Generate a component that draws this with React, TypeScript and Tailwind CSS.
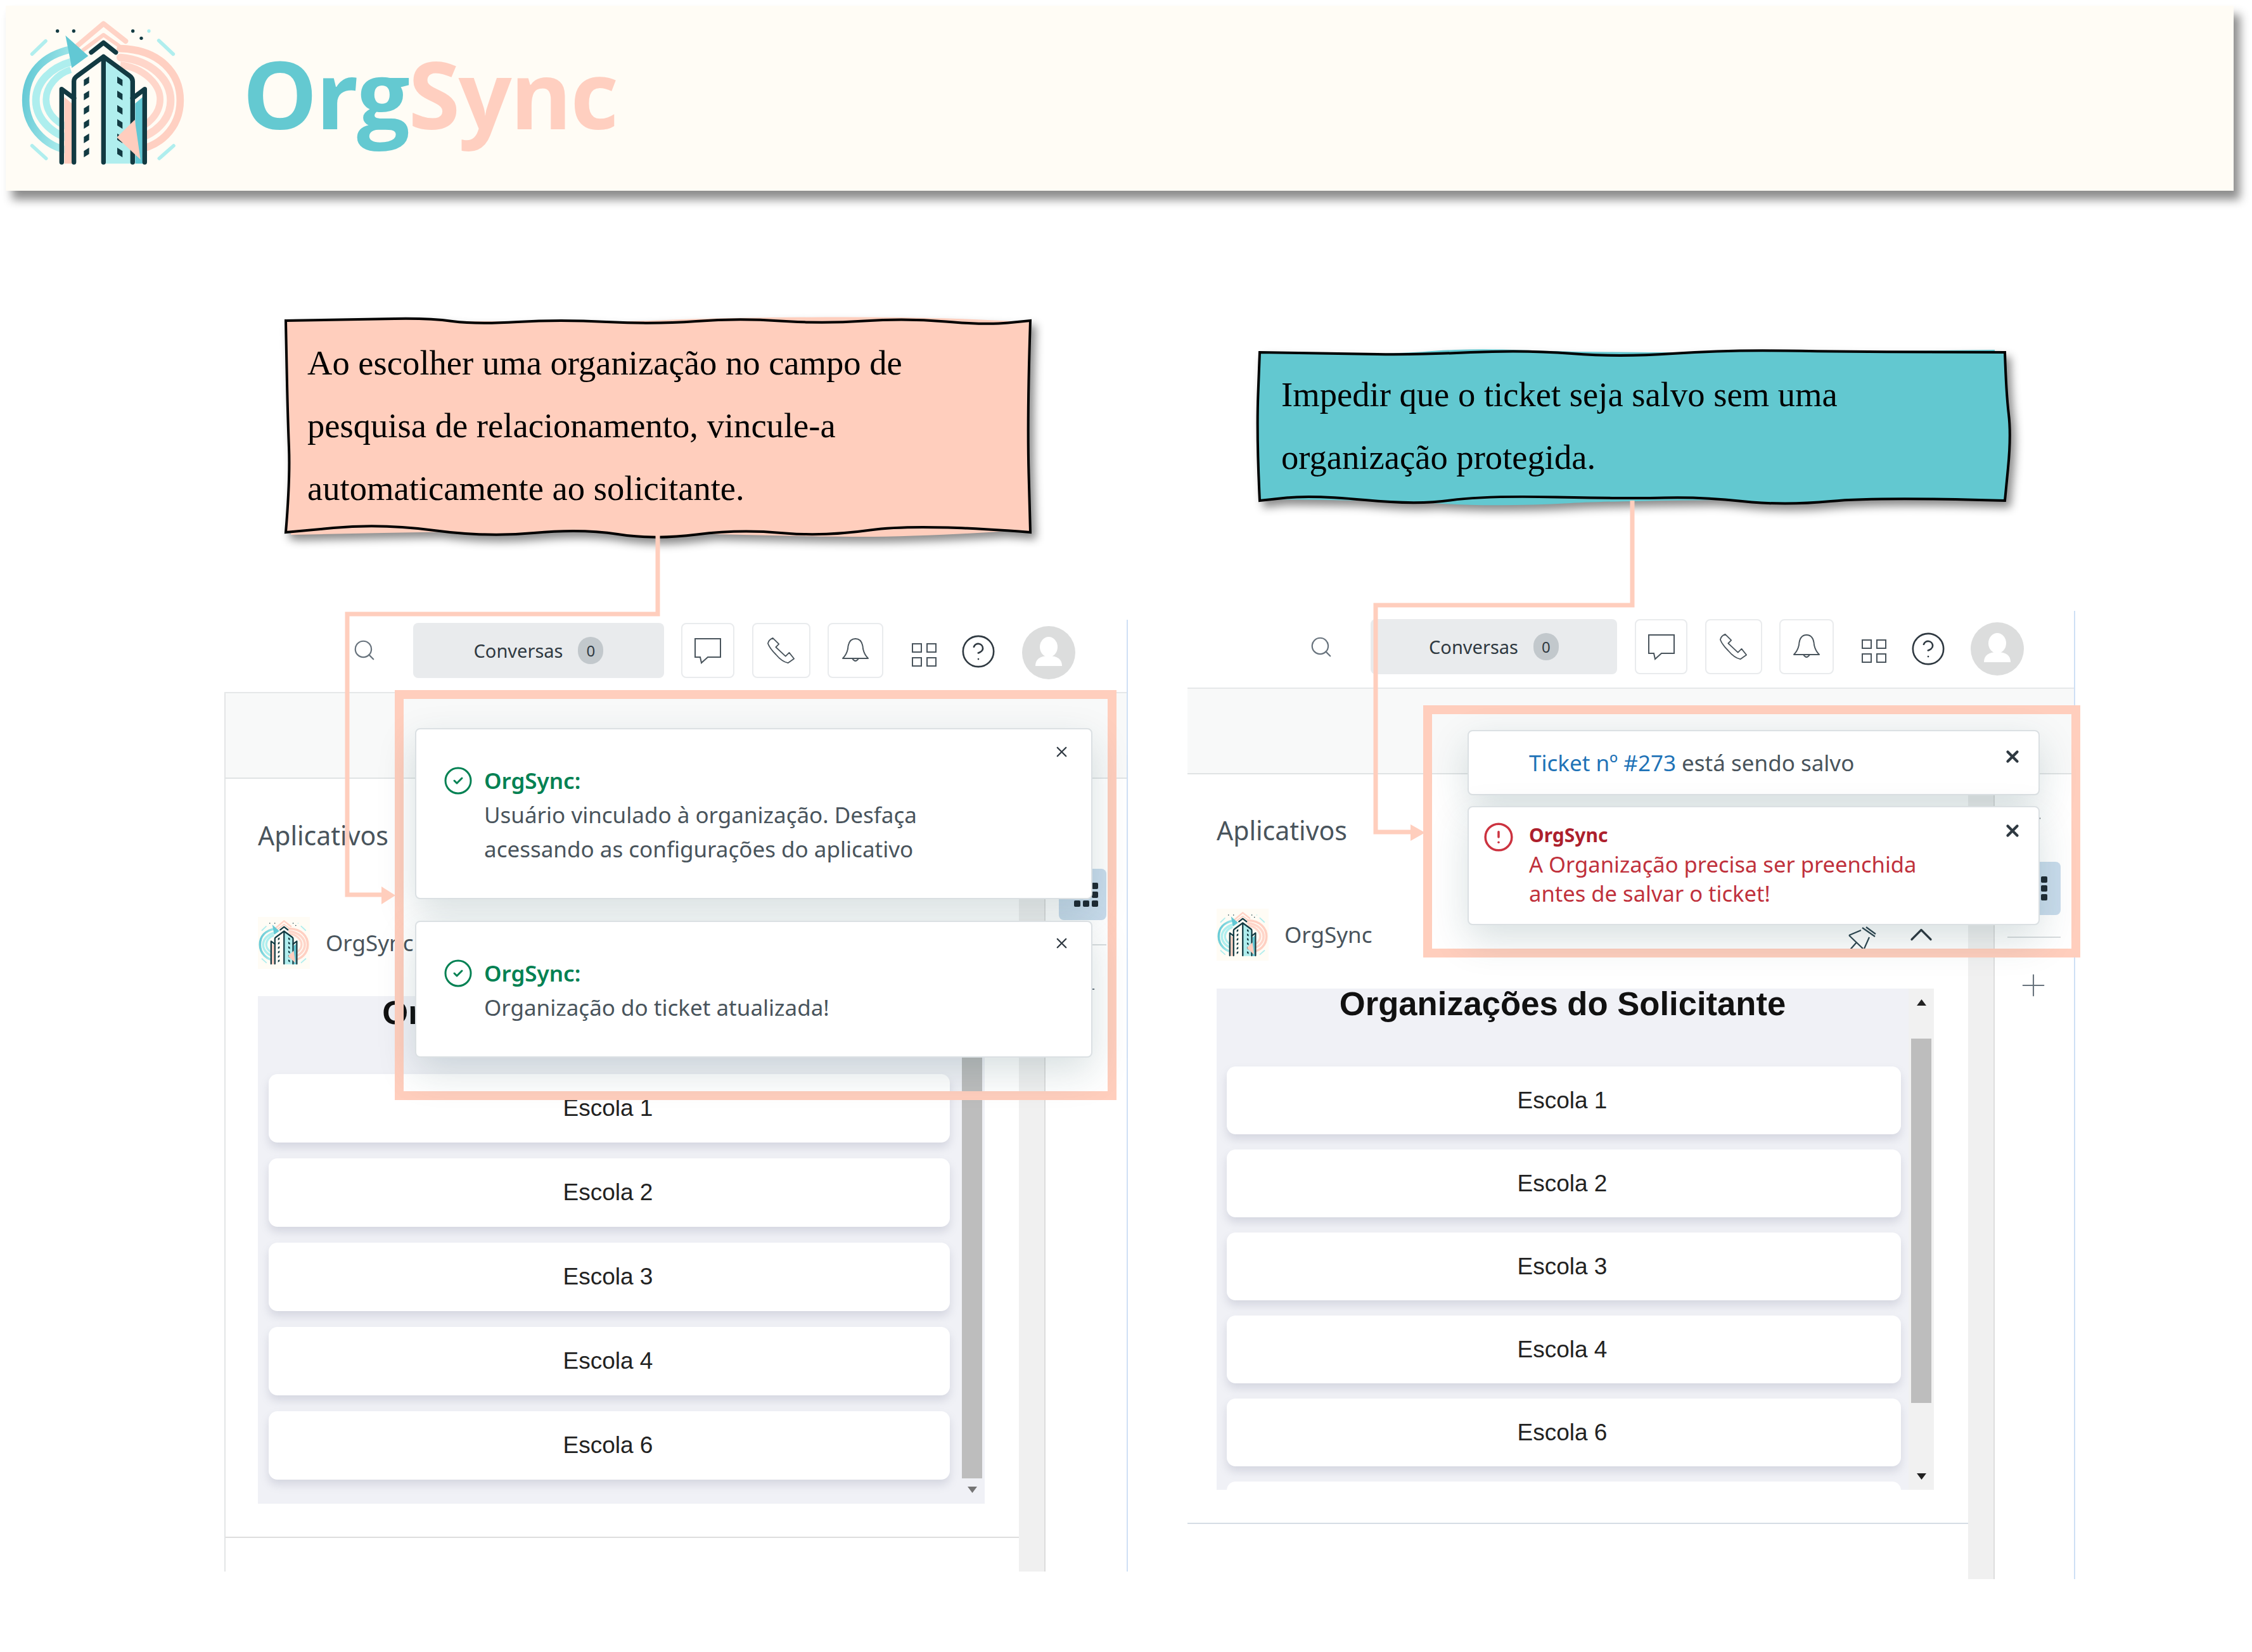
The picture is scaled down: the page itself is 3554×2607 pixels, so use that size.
import React from 'react';
import { ChevronUp, CircleAlert, CircleCheck, CircleHelp, Plus, Search, X } from 'lucide-react';

type Pt = [number, number];

// hand-drawn outline: each side is smoothed on its own so the corners stay sharp
const wavy = (sides: Pt[][]) => {
    const out: string[] = [`M${sides[0][0][0]} ${sides[0][0][1]}`];
    sides.forEach((pts) => {
        for (let i = 1; i < pts.length - 1; i++) {
            const mx = (pts[i][0] + pts[i + 1][0]) / 2;
            const my = (pts[i][1] + pts[i + 1][1]) / 2;
            out.push(`Q${pts[i][0]} ${pts[i][1]} ${mx} ${my}`);
        }
        const last = pts[pts.length - 1];
        out.push(`L${last[0]} ${last[1]}`);
    });
    out.push('Z');
    return out.join(' ');
};

const Logo = ({ className, viewBox }: { className: string; viewBox: string }) => {
    const windows = [0, 67, 135, 202, 270, 337];
    return (
        <svg viewBox={viewBox} className={className} fill="none">
            <defs>
                <linearGradient id="logoTeal" x1="0" y1="0" x2="1" y2="0.4">
                    <stop offset="0" stopColor="#5ec6d3" />
                    <stop offset="1" stopColor="#b0eeee" />
                </linearGradient>
            </defs>
            <path d="M360 222 L490 112 L595 195" stroke="#ffd3c6" strokeWidth="24" strokeLinecap="round" strokeLinejoin="round" />
            <path d="M390 240 L490 165 L565 218" stroke="#ffd3c6" strokeWidth="18" strokeLinejoin="round" />
            <path d="M345 232 C200 260 122 350 122 475 C122 610 230 712 362 715" stroke="url(#logoTeal)" strokeWidth="35" />
            <path d="M340 292 C240 320 170 390 170 475 C170 570 260 650 362 660" stroke="#aeeeee" strokeWidth="36" />
            <path d="M335 330 C270 350 218 410 218 470 C218 540 280 600 362 612" stroke="#aeeeee" strokeWidth="32" />
            <path d="M570 230 C760 235 853 350 853 475 C853 610 750 700 635 710" stroke="#ffd0c2" strokeWidth="35" strokeLinecap="round" />
            <path d="M570 272 C720 285 808 380 808 475 C808 570 730 640 635 660" stroke="#ffd6ca" strokeWidth="36" strokeLinecap="round" />
            <path d="M570 308 C680 320 758 400 758 470 C758 540 700 595 635 615" stroke="#ffd6ca" strokeWidth="32" />
            <polygon points="310,168 418,265 340,322" fill="#62c8d4" />
            <path d="M305 775 V460 L340 490 V775 Z" fill="#ffcdbe" />
            <path d="M640 490 L675 460 V775 H640 Z" fill="#62c8d4" />
            <path d="M350 775 V385 Q350 370 365 360 L490 268 V775 Z" fill="#fffcf5" />
            <path d="M490 268 L615 360 Q628 370 628 385 V775 H490 Z" fill="#b0eeee" />
            <path d="M292 768 V422 L350 465 M685 768 V422 L628 465" stroke="#123a42" strokeWidth="22" strokeLinecap="round" strokeLinejoin="round" />
            <path d="M350 768 V385 Q350 370 365 360 L490 268 L615 360 Q628 370 628 385 V768 M490 268 V768" stroke="#123a42" strokeWidth="22" strokeLinecap="round" strokeLinejoin="round" />
            <path d="M432 248 L490 202 L548 248" stroke="#123a42" strokeWidth="22" strokeLinecap="round" strokeLinejoin="round" />
            {windows.map((dy) => (
                <React.Fragment key={dy}>
                    <polygon points={`397,${378 + dy} 422,${362 + dy} 422,${392 + dy} 397,${408 + dy}`} fill="#123a42" />
                    <polygon points={`555,${362 + dy} 580,${378 + dy} 580,${408 + dy} 555,${392 + dy}`} fill="#123a42" />
                </React.Fragment>
            ))}
            <polygon points="638,567 553,650 665,755" fill="#ffcdbe" />
            <circle cx="272" cy="147" r="8" fill="#123a42" />
            <circle cx="349" cy="147" r="8" fill="#123a42" />
            <circle cx="629" cy="147" r="8" fill="#123a42" />
            <circle cx="669" cy="181" r="8" fill="#123a42" />
            <circle cx="705" cy="147" r="8" fill="#aeeeee" />
            <path d="M152 256 L216 194 M152 690 L218 750 M820 256 L752 192 M754 750 L822 690" stroke="#b0eeee" strokeWidth="17" strokeLinecap="round" />
        </svg>
    );
};

const Callout = ({ outline, under, fill, className, lines }: { outline: string; under: string; fill: string; className: string; lines: string[] }) => (
    <div className={`relative ${className}`}>
        <svg className="absolute inset-0 w-full h-full overflow-visible drop-shadow-[7px_9px_7px_rgba(0,0,0,0.45)]">
            <path d={under} fill={fill} />
            <path d={outline} fill={fill} stroke="#000000" strokeWidth="4" strokeLinejoin="miter" />
        </svg>
        <div className="relative pl-[34px] pt-[17px] text-[54.6px] leading-[99px] text-black font-['Liberation_Serif',serif]">
            {lines.map((line) => (
                <div key={line} className="whitespace-nowrap">{line}</div>
            ))}
        </div>
    </div>
);

const ChatIcon = () => (
    <svg width="44" height="42" viewBox="0 0 44 42" fill="none" stroke="#49545c" strokeWidth="2">
        <path d="M2 2 H42 V31 H22 L12 40 L10 31 H2 Z" />
    </svg>
);

const PhoneIcon = () => (
    <svg width="46" height="46" viewBox="0 0 48 48" fill="none" stroke="#49545c" strokeWidth="1.9" strokeLinejoin="round">
        <path d="M10 3 L20 13 L15 18 L31 33 L37 27 L45 37 L35 44 Q25 42 15 30 Q5 20 2 12 Q3 6 10 3 Z" />
    </svg>
);

const BellIcon = () => (
    <svg width="44" height="41" viewBox="0 0 44 41" fill="none" stroke="#49545c" strokeWidth="1.9" strokeLinejoin="round">
        <path d="M2 33 Q8 27 10 18 Q11 2 22 2 Q33 2 34 18 Q36 27 42 33 Z" />
        <path d="M17 33 Q22 41 27 33" />
    </svg>
);

const PinIcon = ({ className }: { className: string }) => (
    <svg width="48" height="42" viewBox="0 0 48 42" fill="none" stroke="#2f4650" strokeWidth="2.2" className={`shrink-0 ${className}`}>
        <path d="M3 14 L22 6 M35 17 L27 35 M3 14 L25 35" />
        <path d="M24 2 L44 16 M30 1 L45 12" />
        <path d="M15 25 L1 41" />
    </svg>
);

const GridIcon = () => (
    <div className="grid grid-cols-2 gap-[7px] w-[39px] shrink-0">
        {[0, 1, 2, 3].map((i) => (
            <div key={i} className="h-[15px] border-2 border-[#49545c]"></div>
        ))}
    </div>
);

const Avatar = () => (
    <div className="w-[84px] h-[84px] rounded-full bg-[#dcdddd] overflow-hidden shrink-0">
        <svg viewBox="0 0 84 84" className="w-full h-full" fill="#ffffff">
            <ellipse cx="42" cy="33" rx="14" ry="16" />
            <path d="M21 63 C21 50 32 47 42 47 C52 47 63 50 63 63 Z" />
        </svg>
    </div>
);

const Triangle = ({ up, color }: { up?: boolean; color: string }) => (
    <svg width="15" height="10" viewBox="0 0 15 10" fill={color} className="shrink-0">
        <polygon points={up ? '7.5,0 15,10 0,10' : '0,0 15,0 7.5,10'} />
    </svg>
);

const DotGrid = () => (
    <div className="grid grid-cols-3 gap-[4px] w-[38px] shrink-0">
        {[0, 1, 2, 3, 4, 5, 6, 7, 8].map((i) => (
            <div key={i} className="h-[10px] rounded-[2px] bg-[#1f2a33]"></div>
        ))}
    </div>
);

const Toast = ({ className, children }: { className: string; children: React.ReactNode }) => (
    <div className={`relative bg-white border-2 border-[#dbe0e3] rounded-[8px] shadow-[0_22px_60px_rgba(23,73,77,0.17)] ${className}`}>
        {children}
    </div>
);

const CloseBtn = ({ className, strong }: { className: string; strong?: boolean }) => (
    <X className={`absolute text-[#2f3941] ${className}`} size={strong ? 30 : 27} strokeWidth={strong ? 3.4 : 2} />
);

type PanelGeo = {
    panel: string;
    bar: string;
    search: string;
    conv: string;
    chat: string;
    phone: string;
    bell: string;
    grid: string;
    help: string;
    avatar: string;
    strip: string;
    col: string;
    appTitle: string;
    appRow: string;
    pin: string;
    box: string;
    list: string;
    titleBox: string;
    cards: string;
    card: string;
    bottomLine: string;
    scroll: string;
    thumb: string;
    arrowUp: string;
    arrowDown: string;
    side: string;
    chevron: string;
    dotsBtn: string;
    sideLine: string;
    plus: string;
};

const leftGeo: PanelGeo = {
    panel: 'mt-[138px] h-[1502px] w-[1426px]',
    bar: 'h-[116px] pt-[5px]',
    search: 'ml-[202px] mt-[24px]',
    conv: 'ml-[58px] w-[396px]',
    chat: 'ml-[27px] w-[84px]',
    phone: 'ml-[28px] w-[92px]',
    bell: 'ml-[27px] w-[88px]',
    grid: 'ml-[45px] mt-[32px]',
    help: 'ml-[37px] mt-[16px]',
    avatar: 'ml-[40px] mt-[5px]',
    strip: 'border-l-2 border-l-[#e3e5e6]',
    col: 'w-[1254px] border-l-2 border-l-[#e3e5e6]',
    appTitle: 'ml-[51px] pt-[64px]',
    appRow: 'ml-[51px] mt-[104px] w-[1170px]',
    pin: 'ml-[544px] mt-[16px]',
    box: 'ml-[51px] mt-[43px] w-[1147px] h-[801px]',
    list: 'pl-[17px] pr-[15px]',
    titleBox: 'h-[52px] leading-[50px] mb-[71px] pr-[12px]',
    cards: 'gap-[25px]',
    card: 'h-[108px] pr-[4px]',
    bottomLine: 'mt-[52px] border-[#dddddd]',
    scroll: 'w-[40px]',
    thumb: 'mt-[41px] h-[693px]',
    arrowUp: 'mt-[17px]',
    arrowDown: 'mt-[13px]',
    side: 'w-[130px]',
    chevron: 'ml-[40px] mt-[47px]',
    dotsBtn: 'ml-[21px] mt-[59px] w-[75px] h-[81px] pl-[24px]',
    sideLine: 'ml-[21px] mt-[38px] w-[75px]',
    plus: 'ml-[32px] mt-[41px]',
};

const rightGeo: PanelGeo = {
    panel: 'mt-[174px] h-[1528px] w-[1401px]',
    bar: 'h-[123px] pt-[13px]',
    search: 'ml-[192px] mt-[25px]',
    conv: 'ml-[59px] w-[389px]',
    chat: 'ml-[28px] w-[83px]',
    phone: 'ml-[28px] w-[90px]',
    bell: 'ml-[27px] w-[86px]',
    grid: 'ml-[44px] mt-[32px]',
    help: 'ml-[37px] mt-[18px]',
    avatar: 'ml-[38px] mt-[5px]',
    strip: '',
    col: 'w-[1232px]',
    appTitle: 'ml-[46px] pt-[63px]',
    appRow: 'ml-[46px] mt-[99px] w-[1155px]',
    pin: 'ml-[750px] mt-[16px]',
    box: 'ml-[46px] mt-[44px] w-[1132px] h-[791px]',
    list: 'pl-[16px] pr-[12px]',
    titleBox: 'h-[48px] leading-[46px] mb-[75px] pr-[4px]',
    cards: 'gap-[24px]',
    card: 'h-[107px] pr-[5px]',
    bottomLine: 'mt-[52px] border-[#d5dde5]',
    scroll: 'w-[40px] bg-[#f1f1f1]',
    thumb: 'mt-[52px] h-[575px]',
    arrowUp: 'mt-[17px]',
    arrowDown: 'mt-[111px]',
    side: 'w-[127px]',
    chevron: 'ml-[44px] mt-[47px]',
    dotsBtn: 'ml-[25px] mt-[55px] w-[79px] h-[84px] pl-[20px]',
    sideLine: 'ml-[20px] mt-[34px] w-[84px]',
    plus: 'ml-[33px] mt-[47px]',
};

const Panel = ({ geo, upColor, downColor, blankCard, children }: { geo: PanelGeo; upColor: string; downColor: string; blankCard?: boolean; children: React.ReactNode }) => {
    const schools = ['Escola 1', 'Escola 2', 'Escola 3', 'Escola 4', 'Escola 6'];
    const iconBtn = 'h-[87px] flex items-center justify-center rounded-[8px] border-2 border-[#e9ebed] bg-white shrink-0';

    return (
        <div className={`relative flex flex-col border-r-2 border-r-[#cfe0f5] font-['Noto_Sans',sans-serif] ${geo.panel}`}>
            <div className={`flex items-start shrink-0 border-b-2 border-b-[#e6e8e9] ${geo.bar}`}>
                <Search className={`shrink-0 text-[#68737d] ${geo.search}`} size={38} strokeWidth={1.4} />
                <div className={`h-[87px] flex items-center justify-center gap-[24px] rounded-[8px] bg-[#e9ebed] shrink-0 ${geo.conv}`}>
                    <span className="text-[29px] text-[#2f3941]">Conversas</span>
                    <span className="w-[40px] h-[43px] rounded-full bg-[#c2c8cc] flex items-center justify-center text-[24px] text-[#2f3941]">0</span>
                </div>
                <div className={`${iconBtn} ${geo.chat}`}><ChatIcon /></div>
                <div className={`${iconBtn} ${geo.phone}`}><PhoneIcon /></div>
                <div className={`${iconBtn} ${geo.bell}`}><BellIcon /></div>
                <div className={geo.grid}><GridIcon /></div>
                <CircleHelp className={`shrink-0 text-[#2f3941] ${geo.help}`} size={58} strokeWidth={1.1} />
                <div className={geo.avatar}><Avatar /></div>
            </div>
            <div className={`h-[135px] shrink-0 bg-[#f8f9f9] border-b-2 border-b-[#e0e3e4] ${geo.strip}`}></div>
            <div className="flex flex-1 min-h-0">
                <div className={`shrink-0 flex flex-col ${geo.col}`}>
                    <div className={`text-[41px] leading-[50px] text-[#49545c] ${geo.appTitle}`}>Aplicativos</div>
                    <div className={`flex items-center h-[82px] ${geo.appRow}`}>
                        <Logo viewBox="90 50 795 795" className="w-[82px] h-[82px] bg-[#fffcf5] shrink-0" />
                        <span className="ml-[25px] text-[35px] text-[#49545c]">OrgSync</span>
                        <PinIcon className={geo.pin} />
                        <ChevronUp size={60} strokeWidth={1.3} className="ml-[39px] shrink-0 text-[#2f3941]" />
                    </div>
                    <div className={`flex overflow-hidden bg-[#f0f1f6] shrink-0 ${geo.box}`}>
                        <div className={`flex-1 min-w-0 font-['Liberation_Sans',sans-serif] ${geo.list}`}>
                            <div className={`flex items-center justify-center text-[52.6px] font-bold text-[#111111] whitespace-nowrap ${geo.titleBox}`}>Organizações do Solicitante</div>
                            <div className={`flex flex-col ${geo.cards}`}>
                                {schools.map((name) => (
                                    <div key={name} className={`flex items-center justify-center shrink-0 rounded-[14px] bg-white text-[37px] text-[#222222] shadow-[0_8px_14px_rgba(120,125,150,0.22)] ${geo.card}`}>
                                        {name}
                                    </div>
                                ))}
                                {blankCard && <div className={`shrink-0 rounded-[14px] bg-white ${geo.card}`}></div>}
                            </div>
                        </div>
                        <div className={`flex flex-col items-center shrink-0 ${geo.scroll}`}>
                            <div className={geo.arrowUp}><Triangle up color={upColor} /></div>
                            <div className={`w-[32px] bg-[#bdbdbd] shrink-0 ${geo.thumb}`}></div>
                            <div className={geo.arrowDown}><Triangle color={downColor} /></div>
                        </div>
                    </div>
                    <div className={`border-t-2 ${geo.bottomLine}`}></div>
                </div>
                <div className="w-[42px] shrink-0 bg-[#f0f0f0] border-r-2 border-r-[#dddddd]"></div>
                <div className={`flex flex-col items-start shrink-0 ${geo.side}`}>
                    <ChevronUp size={36} strokeWidth={1.6} className={`text-[#49545c] ${geo.chevron}`} />
                    <div className={`flex items-center rounded-[8px] bg-[#c9dcec] ${geo.dotsBtn}`}><DotGrid /></div>
                    <div className={`h-[2px] bg-[#d8dcde] ${geo.sideLine}`}></div>
                    <Plus size={56} strokeWidth={0.9} className={`text-[#68737d] ${geo.plus}`} />
                </div>
            </div>
            {children}
        </div>
    );
};

const SuccessBody = ({ lines }: { lines: string[] }) => (
    <>
        <CircleCheck size={48} strokeWidth={1.5} className="absolute left-[42px] top-[57px] text-[#038153]" />
        <div className="pl-[107px] pt-[54px] text-[35px] leading-[54px] text-[#49545c]">
            <div className="font-semibold text-[#038153]">OrgSync:</div>
            {lines.map((line) => (
                <div key={line} className="whitespace-nowrap">{line}</div>
            ))}
        </div>
    </>
);

const App = () => {
    const leftOutline = wavy([
        [[0, 0], [118, -2], [226, -4], [300, 6], [432, -2], [581, 6], [714, -4], [846, 5], [979, -4], [1104, 7], [1175, 0]],
        [[1175, 0], [1170, 150], [1175, 334]],
        [[1175, 334], [997, 320], [848, 341], [715, 329], [582, 346], [466, 328], [317, 342], [151, 320], [0, 334]],
        [[0, 334], [7, 250], [3, 150], [0, 0]],
    ]);
    const leftUnder = wavy([
        [[2, 2], [300, 0], [500, 3], [700, -5], [1000, -6], [1172, 2]],
        [[1172, 2], [1172, 330]],
        [[1172, 330], [990, 342], [800, 340], [600, 335], [300, 332], [8, 338]],
    ]);
    const rightOutline = wavy([
        [[0, 0], [125, 2], [247, 4], [419, -4], [566, 8], [737, -4], [925, -1], [1176, 0]],
        [[1176, 0], [1178, 64], [1186, 131], [1176, 234]],
        [[1176, 234], [975, 228], [827, 242], [696, 228], [582, 231], [354, 226], [248, 241], [84, 225], [0, 234]],
        [[0, 234], [-5, 131], [0, 0]],
    ]);
    const rightUnder = wavy([
        [[2, 4], [200, 4], [330, -7], [500, 0], [800, 0], [1160, -4]],
        [[1160, -4], [1174, 230]],
        [[1174, 230], [600, 232], [380, 244], [200, 234], [4, 232]],
    ]);

    return (
        <div className="relative w-[3554px] h-[2607px] overflow-hidden bg-white">
            <header className="ml-[9px] mt-[9px] w-[3516px] h-[292px] flex items-start bg-[#fffcf5] shadow-[10px_14px_14px_rgba(0,0,0,0.45)]">
                <Logo viewBox="27 27 933 843" className="w-[311px] h-[281px] shrink-0" />
                <div className="ml-[63px] mt-[64px] text-[148px] leading-[148px] font-bold tracking-[-2.4px] font-['Open_Sans',sans-serif]">
                    <span className="text-[#64c9d1]">Org</span><span className="text-[#ffcfc0]">Sync</span>
                </div>
            </header>
            <main className="mt-[205px] pl-[354px] flex items-start gap-[94px]">
                <section className="w-[1426px] shrink-0">
                    <Callout
                        className="ml-[97px] w-[1175px] h-[334px]"
                        outline={leftOutline}
                        under={leftUnder}
                        fill="#ffcebd"
                        lines={['Ao escolher uma organização no campo de', 'pesquisa de relacionamento, vincule-a', 'automaticamente ao solicitante.']}
                    />
                    <Panel geo={leftGeo} upColor="#757575" downColor="#757575">
                        <div className="absolute left-[269px] top-[111px] w-[1139px] h-[647px] border-[14px] border-[#ffcebd] pl-[18px] pt-[46px] flex flex-col gap-[34px]">
                            <Toast className="w-[1069px] h-[270px] shrink-0">
                                <CloseBtn className="right-[33px] top-[22px]" />
                                <SuccessBody lines={['Usuário vinculado à organização. Desfaça', 'acessando as configurações do aplicativo']} />
                            </Toast>
                            <Toast className="w-[1069px] h-[216px] shrink-0">
                                <CloseBtn className="right-[33px] top-[20px]" />
                                <SuccessBody lines={['Organização do ticket atualizada!']} />
                            </Toast>
                        </div>
                    </Panel>
                </section>
                <section className="w-[1401px] shrink-0 mt-[50px]">
                    <Callout
                        className="ml-[114px] w-[1176px] h-[234px]"
                        outline={rightOutline}
                        under={rightUnder}
                        fill="#62c8d0"
                        lines={['Impedir que o ticket seja salvo sem uma', 'organização protegida.']}
                    />
                    <Panel geo={rightGeo} upColor="#222222" downColor="#222222" blankCard>
                        <div className="absolute left-[372px] top-[149px] w-[1037px] h-[398px] border-[14px] border-[#ffcebd] pl-[56px] pt-[25px] flex flex-col gap-[17px]">
                            <Toast className="w-[903px] h-[103px] shrink-0">
                                <CloseBtn strong className="right-[26px] top-[25px]" />
                                <div className="pl-[95px] pt-[27px] text-[35px] leading-[46px] text-[#49545c] whitespace-nowrap">
                                    <span className="text-[#1f73b7]">Ticket nº #273</span> está sendo salvo
                                </div>
                            </Toast>
                            <Toast className="w-[903px] h-[188px] shrink-0">
                                <CloseBtn strong className="right-[26px] top-[22px]" />
                                <CircleAlert size={50} strokeWidth={1.7} className="absolute left-[22px] top-[22px] text-[#cc3340]" />
                                <div className="pl-[95px] pt-[21px] text-[34.6px] leading-[46px] text-[#c0313c] whitespace-nowrap">
                                    <div className="text-[30px] font-bold text-[#ad1f2d]">OrgSync</div>
                                    <div>A Organização precisa ser preenchida</div>
                                    <div>antes de salvar o ticket!</div>
                                </div>
                            </Toast>
                        </div>
                    </Panel>
                </section>
            </main>
            {/* connector lines from the callouts down to the highlighted toasts */}
            <svg className="absolute left-0 top-0 w-[3554px] h-[2607px] pointer-events-none" fill="none">
                <path d="M1038 840 V969 H548 V1412 H606" stroke="#ffcebd" strokeWidth="7" />
                <polygon points="602,1399 624,1413 602,1427" fill="#ffcebd" />
                <path d="M2576 790 V955 H2171 V1313 H2230" stroke="#ffcebd" strokeWidth="7" />
                <polygon points="2226,1301 2249,1314 2226,1327" fill="#ffcebd" />
            </svg>
        </div>
    );
};

export default App;
